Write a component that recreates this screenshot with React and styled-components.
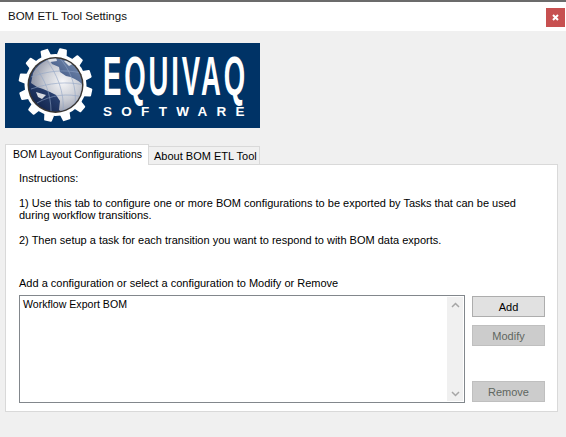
import React from "react";
import styled, { createGlobalStyle } from "styled-components";

const Global = createGlobalStyle`
  html, body { margin: 0; padding: 0; background: #f0f0f0; }
  body { font-family: "Liberation Sans", Arial, sans-serif; font-size: 11px; color: #000; }
`;

const Window = styled.div`
  width: 566px; height: 437px; display: flex; flex-direction: column;
  background: #f0f0f0; overflow: hidden;
`;
const TitleBar = styled.header`
  height: 29px; flex: none; background: #fff; border-top: 2px solid #6b6b6b;
  display: flex; align-items: flex-start; justify-content: space-between;
  padding: 0 1px 0 8px;
`;
const Title = styled.div`
  font-size: 11.5px; line-height: 14px; color: #111; margin-top: 7px;
`;
const CloseButton = styled.button`
  width: 19px; height: 19px; margin: 6px 0 0; padding: 0; border: 0; background: #c75050;
  display: flex; align-items: center; justify-content: center;
`;
const Content = styled.main`
  flex: 1; display: flex; flex-direction: column; padding: 12px 8px 25px 5px; min-height: 0;
`;
const Logo = styled.svg`
  display: block; width: 255px; height: 85px; flex: none; margin-bottom: 16px;
`;
const Tabs = styled.nav`
  display: flex; align-items: flex-end; height: 21px; flex: none; position: relative; z-index: 1;
  margin-bottom: -1px;
`;
const Tab = styled.div`
  box-sizing: border-box; white-space: nowrap;
  background: ${p => (p.$active ? "#fff" : "#f0f0f0")};
  border: 1px solid #d9d9d9;
  border-bottom: ${p => (p.$active ? "0" : "1px solid #d9d9d9")};
  border-left: ${p => (p.$active ? "1px solid #d9d9d9" : "0")};
  height: ${p => (p.$active ? "21px" : "19px")};
  width: ${p => (p.$active ? "144px" : "111px")};
  padding: ${p => (p.$active ? "3px 0 0 7px" : "3px 0 0 5px")};
  font-size: ${p => (p.$active ? "10.5px" : "11px")};
`;
const Panel = styled.section`
  flex: 1; min-height: 0; background: #fff; border: 1px solid #d9d9d9;
  padding: 7px 11px 7px 13px; display: flex; flex-direction: column;
`;
const Para = styled.p`
  margin: 0 0 12px; line-height: 12.5px;
  width: 510px;
`;
const ListLabel = styled.div`
  margin-top: 19px; line-height: 13px; margin-bottom: 5px;
`;
const ListRow = styled.div`
  flex: 1; display: flex; gap: 7px; min-height: 0;
`;
const ListBox = styled.div`
  box-sizing: border-box; width: 446px; height: 108px; border: 1px solid #82878c; background: #fff;
  display: flex; justify-content: space-between; padding: 1px 1px 1px 3px;
`;
const ListItem = styled.div`
  font-size: 10.6px; line-height: 14px;
`;
const ScrollBar = styled.div`
  width: 16px; background: #f0f0f0; display: flex; flex-direction: column; justify-content: space-between;
  align-items: center; padding: 5px 0 4px;
`;
const Buttons = styled.div`
  display: flex; flex-direction: column; width: 73px; padding-top: 1px;
`;
const Button = styled.button`
  box-sizing: border-box; width: 73px; height: 21px; padding: 0; font: inherit;
  flex: none;
  background: ${p => (p.$disabled ? "#cccccc" : "#e1e1e1")};
  border: 1px solid ${p => (p.$disabled ? "#bfbfbf" : "#adadad")};
  color: ${p => (p.$disabled ? "#5f6660" : "#000")};
  margin-top: ${p => p.$gap || 0}px;
`;

const teeth = Array.from({ length: 12 }, (_, i) => i * 30 + 12);

function Chevron({ up }) {
  return (
    <svg width="9" height="6" viewBox="0 0 9 6">
      <path d={up ? "M1 5 L4.5 1.5 L8 5" : "M1 1 L4.5 4.5 L8 1"} fill="none" stroke="#a6a6a6" strokeWidth="1.5" />
    </svg>
  );
}

function EquivaqLogo() {
  return (
    <Logo viewBox="0 0 255 85">
      <defs>
        <radialGradient id="globe" cx="0.62" cy="0.42" r="0.62">
          <stop offset="0" stopColor="#f6f6f8" />
          <stop offset="0.55" stopColor="#c9ccd4" />
          <stop offset="1" stopColor="#8f94a6" />
        </radialGradient>
        <linearGradient id="sea" x1="0.85" y1="0.1" x2="0.15" y2="0.9">
          <stop offset="0" stopColor="#6d83a8" />
          <stop offset="0.6" stopColor="#2c4474" />
          <stop offset="1" stopColor="#14264e" />
        </linearGradient>
        <clipPath id="ball"><circle cx="50.5" cy="42" r="26.5" /></clipPath>
      </defs>
      <rect width="255" height="85" fill="#003366" />
      <circle cx="50.5" cy="42" r="31" fill="#fff" />
      {teeth.map(a => (
        <path key={a} d="M45.5 12 L46.5 6 Q46.6 5 47.6 5 L53.4 5 Q54.4 5 54.5 6 L55.5 12 Z" fill="#fff" transform={`rotate(${a} 50.5 42)`} />
      ))}
      <circle cx="50.5" cy="42" r="28" fill="#3a3632" />
      <circle cx="50.5" cy="42" r="26.5" fill="url(#sea)" />
      <g clipPath="url(#ball)">
        <path fill="url(#globe)" d="M28 30 C32 22 40 18 44 16 L47 21 L54 24 L55 29 L61 33 C67 34 73 37 77 41 C78 50 75 58 69 65 L59 70 L54 67 L55 58 L51 52 L45 49 L38 46 L32 44 L26 40 Z" />
        <path fill="#dfe1e6" d="M59 18 L67 16 L71 19 L64 23 Z M41 15 L51 14 L52 18 L45 19 Z" />
        <path fill="#d8dae0" d="M31 49 L41 52 L37 56 L33 54 Z" />
        <g fill="none" stroke="#8fa3c4" strokeWidth="0.7" opacity="0.85">
          <path d="M40 15 C52 30 60 50 58 70" />
          <path d="M54 14 C66 28 72 44 70 62" />
          <path d="M30 24 C40 36 46 52 46 68" />
          <path d="M26 34 C42 28 60 26 76 30" />
          <path d="M26 46 C44 40 62 38 79 42" />
          <path d="M32 60 C46 52 62 50 78 54" />
        </g>
      </g>
      <text transform="translate(98 52) scale(0.5 1)" fontFamily="'Liberation Sans', sans-serif" fontWeight="700" fontSize="55" letterSpacing="5.8" fill="#fff">EQUIVAQ</text>
      <text x="98" y="73" fontFamily="'Liberation Sans', sans-serif" fontWeight="700" fontSize="13.5" letterSpacing="9.3" fill="#fff">SOFTWARE</text>
    </Logo>
  );
}

export default function App() {
  return (
    <Window>
      <Global />
      <TitleBar>
        <Title>BOM ETL Tool Settings</Title>
        <CloseButton aria-label="Close">
          <svg width="7" height="7" viewBox="0 0 7 7">
            <path d="M1 1 L6 6 M6 1 L1 6" stroke="#fff" strokeWidth="2" />
          </svg>
        </CloseButton>
      </TitleBar>
      <Content>
        <EquivaqLogo />
        <Tabs>
          <Tab $active>BOM Layout Configurations</Tab>
          <Tab>About BOM ETL Tool</Tab>
        </Tabs>
        <Panel>
          <Para>Instructions:</Para>
          <Para>1) Use this tab to configure one or more BOM configurations to be exported by Tasks that can be used during workflow transitions.</Para>
          <Para>2) Then setup a task for each transition you want to respond to with BOM data exports.</Para>
          <ListLabel>Add a configuration or select a configuration to Modify or Remove</ListLabel>
          <ListRow>
            <ListBox>
              <ListItem>Workflow Export BOM</ListItem>
              <ScrollBar>
                <Chevron up />
                <Chevron />
              </ScrollBar>
            </ListBox>
            <Buttons>
              <Button>Add</Button>
              <Button $disabled $gap={8}>Modify</Button>
              <Button $disabled $gap={35}>Remove</Button>
            </Buttons>
          </ListRow>
        </Panel>
      </Content>
    </Window>
  );
}
